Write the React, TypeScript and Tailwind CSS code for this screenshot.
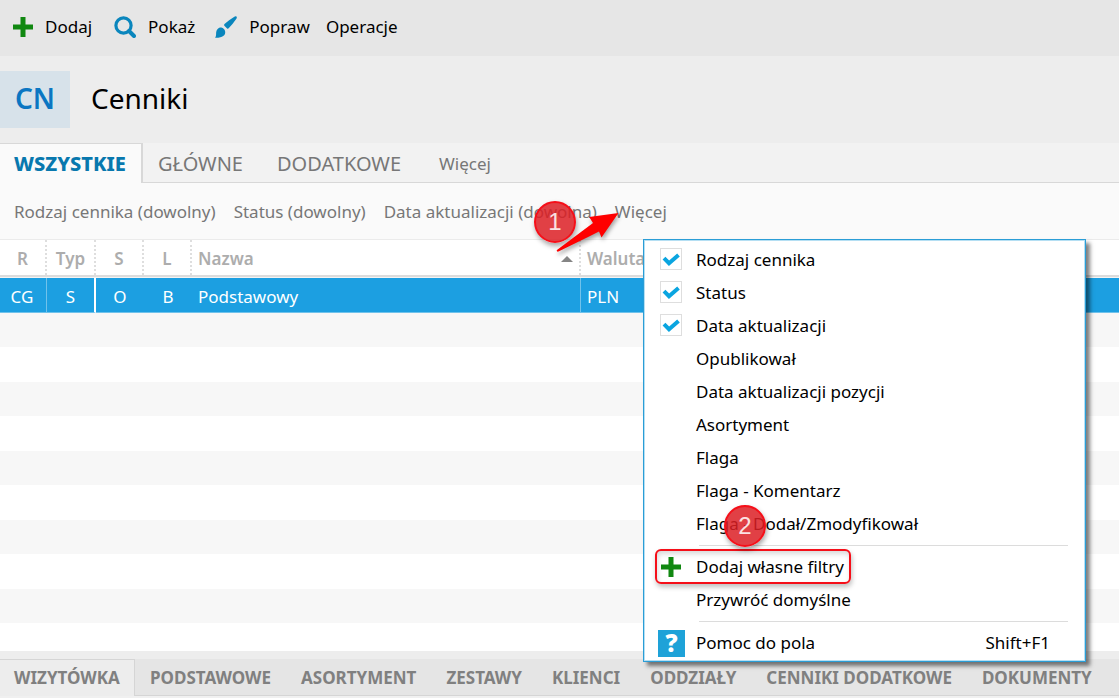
import React from 'react';

interface FilterOption {
  name: string;
  active: boolean;
}

const filterOptions: FilterOption[] = [
  { name: 'Rodzaj cennika', active: true },
  { name: 'Status', active: true },
  { name: 'Data aktualizacji', active: true },
  { name: 'Opublikował', active: false },
  { name: 'Data aktualizacji pozycji', active: false },
  { name: 'Asortyment', active: false },
  { name: 'Flaga', active: false },
  { name: 'Flaga - Komentarz', active: false },
  { name: 'Flaga - Dodał/Zmodyfikował', active: false },
];

const detailTabs = ['PODSTAWOWE', 'ASORTYMENT', 'ZESTAWY', 'KLIENCI', 'ODDZIAŁY', 'CENNIKI DODATKOWE', 'DOKUMENTY'];

const emptyRows = Array.from({ length: 12 }, (_, i) => i);

function PlusIcon() {
  return (
    <svg className="h-5 w-5 shrink-0" viewBox="0 0 20 20" fill="#118811">
      <path d="M7.500 0h5v7.500H20v5h-7.500V20h-5v-7.500H0v-5h7.500z" />
    </svg>
  );
}

function SearchIcon() {
  return (
    <svg className="h-[22px] w-[22px] shrink-0" viewBox="0 0 22 22" fill="none" stroke="#0a86bd">
      <circle cx="9.5" cy="9.5" r="7.6" strokeWidth="3.2" />
      <path d="M15 15l5 5" strokeWidth="4" strokeLinecap="round" />
    </svg>
  );
}

function BrushIcon() {
  return (
    <svg className="h-[22px] w-[22px] shrink-0" viewBox="0 0 22 22" fill="#0a86bd">
      <path d="M21.4.6c.7.6.5 1.400-.2 2.400-2.200 3.200-4.700 6.400-7.500 9.300-.5.500-1.100.5-1.600.1L9.400 9.700c-.4-.5-.4-1.100.1-1.600C12.500 5.500 15.700 3.100 19 1c1-.6 1.800-.9 2.400-.4z" />
      <path d="M6.300 11.600c2.200.5 3.500 1.900 3.900 4.100.4 3.800-3 6.300-10.200 6 .9-1 1.100-2.300 1.100-4.200.1-3.500 2.200-6.200 5.200-5.900z" />
    </svg>
  );
}

function Separator() {
  return (
    <div className="flex h-[10px] items-center pl-[54px] pr-4">
      <div className="h-px w-full bg-[#dcdcdc]" />
    </div>
  );
}

function StepBadge({ step }: { step: number }) {
  return (
    <span className="flex h-[42px] w-[42px] items-center justify-center rounded-full border-2 border-[#f50f19] bg-[#dc1e24]/85 font-['Liberation_Sans'] text-2xl text-white/85 shadow-[1px_3px_5px_rgba(0,0,0,0.35)]">
      {step}
    </span>
  );
}

function FilterMenu() {
  return (
    <div className="absolute left-[643px] top-[239px] w-[443px] border border-[#2a9dd6] bg-white px-px pb-px pt-[2px] text-black shadow-[4px_4px_4px_rgba(0,0,0,0.5)] outline-1 -outline-offset-2 outline-[#b5dff3]">
      <div className="pt-px">
        {filterOptions.map((option) => (
          <label key={option.name} className="flex h-[33px] items-center gap-[14px] pl-[15px]">
            <span className="relative h-6 w-[22px]">
              <input
                type="checkbox"
                defaultChecked={option.active}
                className="peer block h-[22px] w-[22px] appearance-none checked:border checked:border-[#dedede]"
              />
              <svg className="absolute inset-0 hidden h-[22px] w-[22px] peer-checked:block" viewBox="0 0 22 22" fill="none" stroke="#0aa5e0" strokeWidth="4">
                <path d="M4 10.200l5 5L18.500 7" />
              </svg>
            </span>
            {option.name}
          </label>
        ))}
      </div>
      <Separator />
      <button className="flex h-[33px] w-full items-center gap-[15px] pl-4">
        <PlusIcon />
        Dodaj własne filtry
      </button>
      <button className="flex h-[33px] w-full items-center pl-[51px]">Przywróć domyślne</button>
      <Separator />
      <button className="flex h-[34px] w-full items-center gap-[11px] pl-[13px] pr-[34px]">
        <span className="flex h-[27px] w-[27px] items-center justify-center bg-[#1ea2d8] text-2xl font-black text-white">?</span>
        Pomoc do pola
        <span className="ml-auto">Shift+F1</span>
      </button>
    </div>
  );
}

function Annotations() {
  return (
    <>
      <div className="absolute left-[534px] top-[201px]">
        <StepBadge step={1} />
      </div>
      <svg className="absolute left-[555px] top-[208px] h-[46px] w-[68px] drop-shadow-[1px_3px_2px_rgba(0,0,0,0.35)]" viewBox="0 0 68 46" fill="#fe0000">
        <path d="M63.500 5L46.500 29.500 44 23.500C31 30 17 37 3.500 43.500c-1.500.6-2.500-.6-1.200-1.800L38 15l-3.800-6z" />
      </svg>
      <div className="pointer-events-none absolute left-[655px] top-[549px] h-[35px] w-[196px] rounded-md border-2 border-[#f50f19] shadow-[1px_3px_5px_rgba(0,0,0,0.25),inset_1px_3px_5px_rgba(0,0,0,0.15)]" />
      <div className="absolute left-[724px] top-[505px]">
        <StepBadge step={2} />
      </div>
    </>
  );
}

export default function App() {
  const headCell = 'border-r-2 border-dotted border-[#dedede] p-0 pt-[3px] font-semibold';

  return (
    <div className="relative flex h-screen flex-col overflow-hidden bg-white font-['Noto_Sans',sans-serif] text-[17px] leading-6">
      <div className="flex h-14 shrink-0 items-start bg-[#e6e6e6] pl-[13px] pt-[15px] text-black">
        <button className="mr-[22px] flex items-center gap-3">
          <PlusIcon />
          Dodaj
        </button>
        <button className="mr-5 flex items-center gap-3">
          <SearchIcon />
          Pokaż
        </button>
        <button className="mr-4 flex items-center gap-3">
          <BrushIcon />
          Popraw
        </button>
        <button>Operacje</button>
      </div>

      <header className="flex h-[87px] shrink-0 items-center bg-[#ededed] text-[28px] text-black">
        <div className="flex h-[57px] w-[70px] items-center justify-center bg-[#d7e2ea] pb-1 font-semibold text-[#0b76c2]">CN</div>
        <h1 className="pb-1 pl-[21px]">Cenniki</h1>
      </header>

      <nav className="flex h-10 shrink-0 bg-[#f2f2f2] text-xl text-[#777]">
        <button className="w-[143px] shrink-0 border-r-2 border-t border-[#d8d8d8] bg-[#fafafa] pl-[14px] pt-px text-left font-extrabold text-[#0878ae]">WSZYSTKIE</button>
        <div className="flex flex-1 items-center border-b border-[#d8d8d8] pl-[15px] pt-[3px]">
          <button className="mr-[34px]">GŁÓWNE</button>
          <button className="mr-[38px]">DODATKOWE</button>
          <button className="text-[17px]">Więcej</button>
        </div>
      </nav>

      <div className="flex h-14 shrink-0 items-center gap-[18px] bg-[#fafafa] pl-[14px] pt-[2px] text-[#777]">
        <button>Rodzaj cennika (dowolny)</button>
        <button>Status (dowolny)</button>
        <button>Data aktualizacji (dowolna)</button>
        <button>Więcej</button>
      </div>

      <div className="min-h-0 flex-1 overflow-hidden border-t border-[#ebebeb]">
        <table className="w-full table-fixed border-separate border-spacing-0">
          <colgroup>
            <col className="w-[47px]" />
            <col className="w-[49px]" />
            <col className="w-12" />
            <col className="w-12" />
            <col className="w-[389px]" />
            <col />
          </colgroup>
          <thead className="text-[#adadad]">
            <tr className="h-[35px]">
              <th className={headCell}>R</th>
              <th className={headCell}>Typ</th>
              <th className={headCell}>S</th>
              <th className={headCell}>L</th>
              <th className={headCell}>
                <div className="flex items-center justify-between pl-1.5 pr-1.5">
                  Nazwa
                  <svg className="h-1.5 w-3" viewBox="0 0 12 6" fill="#858585">
                    <path d="M0 6l6-6 6 6z" />
                  </svg>
                </div>
              </th>
              <th className="p-0 pl-1.5 pt-[3px] text-left font-semibold">Waluta</th>
            </tr>
            <tr>
              <td colSpan={6} className="h-[3px] border-t-2 border-[#dcdcdc] bg-[#f4f4f4] p-0" />
            </tr>
          </thead>
          <tbody>
            <tr className="h-[35px] bg-[#1c9fe1] text-center text-white">
              <td className="border-b border-r border-[#70c2eb] p-0 pr-[2px] pt-[3px]">CG</td>
              <td className="border-b border-r-2 border-b-[#70c2eb] border-r-white p-0 pt-[3px]">S</td>
              <td className="border-b border-[#70c2eb] p-0 pt-[3px]">O</td>
              <td className="border-b border-[#70c2eb] p-0 pt-[3px]">B</td>
              <td className="border-b border-r border-[#70c2eb] p-0 pl-1.5 pt-[3px] text-left">Podstawowy</td>
              <td className="border-b border-[#70c2eb] p-0 pl-1.5 pt-[3px] text-left">PLN</td>
            </tr>
            {emptyRows.map((row) => (
              <tr key={row} className="h-[35px] odd:bg-white even:h-[34px] even:bg-[#f7f7f7]">
                <td colSpan={6} className="p-0" />
              </tr>
            ))}
          </tbody>
        </table>
      </div>

      <nav className="flex h-[47px] shrink-0 border-b-2 border-t-8 border-b-[#f0f0f0] border-t-[#ededed] bg-[#e5e5e5] text-[17px] font-bold text-[#808080]">
        <button className="w-[135px] shrink-0 border-r border-t border-[#d5d5d5] bg-[#ededed] pl-[14px] text-left">WIZYTÓWKA</button>
        <div className="flex flex-1 items-center gap-[30px] whitespace-nowrap border-b border-[#d5d5d5] pl-[15px] pt-[2px]">
          {detailTabs.map((tab) => (
            <button key={tab}>{tab}</button>
          ))}
        </div>
      </nav>

      <FilterMenu />
      <Annotations />
    </div>
  );
}
